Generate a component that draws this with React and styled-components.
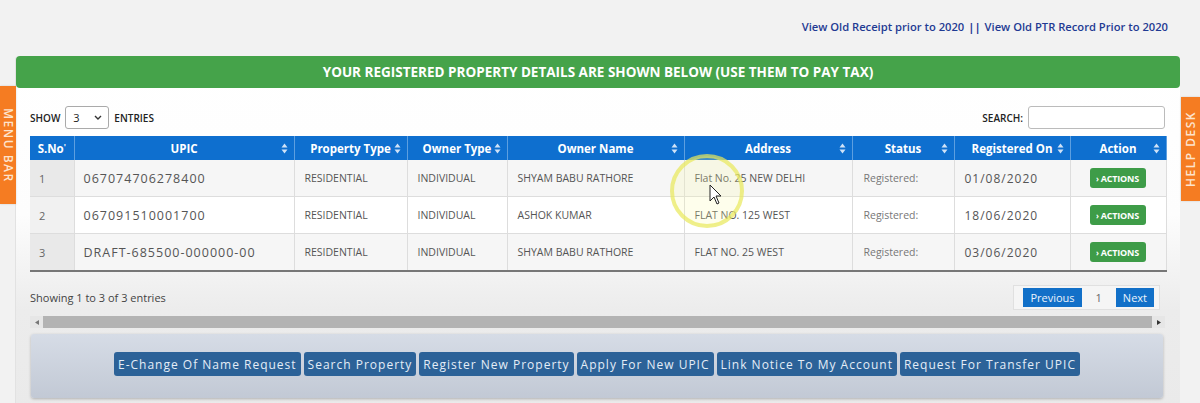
import React from "react";
import styled, { createGlobalStyle } from "styled-components";

const GlobalStyle = createGlobalStyle`
  html, body {
    margin: 0;
    padding: 0;
    background: #f2f2f2;
    font-family: "Open Sans", "Liberation Sans", sans-serif;
  }
`;

const columns = [
  { key: "sno", title: "S.No", width: 44, sort: false },
  { key: "upic", title: "UPIC", width: 220, sort: true },
  { key: "ptype", title: "Property Type", width: 113, sort: true },
  { key: "otype", title: "Owner Type", width: 100, sort: true },
  { key: "oname", title: "Owner Name", width: 177, sort: true },
  { key: "address", title: "Address", width: 168, sort: true },
  { key: "status", title: "Status", width: 102, sort: true },
  { key: "regon", title: "Registered On", width: 116, sort: true },
  { key: "action", title: "Action", width: 96, sort: true },
];

const rows = [
  {
    sno: "1",
    upic: "067074706278400",
    ptype: "RESIDENTIAL",
    otype: "INDIVIDUAL",
    oname: "SHYAM BABU RATHORE",
    address: "Flat No. 25 NEW DELHI",
    status: "Registered:",
    regon: "01/08/2020",
  },
  {
    sno: "2",
    upic: "067091510001700",
    ptype: "RESIDENTIAL",
    otype: "INDIVIDUAL",
    oname: "ASHOK KUMAR",
    address: "FLAT NO. 125 WEST",
    status: "Registered:",
    regon: "18/06/2020",
  },
  {
    sno: "3",
    upic: "DRAFT-685500-000000-00",
    ptype: "RESIDENTIAL",
    otype: "INDIVIDUAL",
    oname: "SHYAM BABU RATHORE",
    address: "FLAT NO. 25 WEST",
    status: "Registered:",
    regon: "03/06/2020",
  },
];

const links = [
  "E-Change Of Name Request",
  "Search Property",
  "Register New Property",
  "Apply For New UPIC",
  "Link Notice To My Account",
  "Request For Transfer UPIC",
];

function SortIcon() {
  return (
    <svg width="7" height="11" viewBox="0 0 7 11">
      <path d="M3.5 0.5 L6.5 4.5 L0.5 4.5 Z" fill="#cfe2f7" />
      <path d="M3.5 10.5 L6.5 6.5 L0.5 6.5 Z" fill="#cfe2f7" />
    </svg>
  );
}

function App() {
  return (
    <Page>
      <GlobalStyle />
      <TopLinks>
        <TopLink>View Old Receipt prior to 2020</TopLink>
        <Sep>||</Sep>
        <TopLink>View Old PTR Record Prior to 2020</TopLink>
      </TopLinks>

      <Card>
        <CardTitle>
          YOUR REGISTERED PROPERTY DETAILS ARE SHOWN BELOW (USE THEM TO PAY TAX)
        </CardTitle>
        <CardBody>
          <Controls>
            <Label>
              SHOW
              <Select>
                <span>3</span>
                <svg width="8" height="5" viewBox="0 0 8 5">
                  <path d="M1 1 L4 4 L7 1" stroke="#333" strokeWidth="1.4" fill="none" />
                </svg>
              </Select>
              ENTRIES
            </Label>
            <Label>
              SEARCH:
              <SearchInput />
            </Label>
          </Controls>

          <Table>
            <colgroup>
              {columns.map((c) => (
                <col key={c.key} style={{ width: c.width }} />
              ))}
            </colgroup>
            <thead>
              <tr>
                {columns.map((c) => (
                  <Th key={c.key}>
                    {c.title}
                    {c.sort ? (
                      <SortWrap>
                        <SortIcon />
                      </SortWrap>
                    ) : (
                      <Tick>'</Tick>
                    )}
                  </Th>
                ))}
              </tr>
            </thead>
            <tbody>
              {rows.map((r, i) => (
                <Tr key={r.sno} $odd={i % 2 === 0}>
                  <IndexCell $odd={i % 2 === 0}>{r.sno}</IndexCell>
                  <Td $size={12.5} $pad={9} $spacing={1}>{r.upic}</Td>
                  <Td>{r.ptype}</Td>
                  <Td>{r.otype}</Td>
                  <Td>{r.oname}</Td>
                  <Td>{r.address}</Td>
                  <Td $pad={11} $muted>{r.status}</Td>
                  <Td $size={12} $pad={10} $spacing={1}>{r.regon}</Td>
                  <Td $center>
                    <ActionBtn>
                      <small>›</small> ACTIONS
                    </ActionBtn>
                  </Td>
                </Tr>
              ))}
            </tbody>
          </Table>

          <Footer>
            <Info>Showing 1 to 3 of 3 entries</Info>
            <Pager>
              <PageBtn>Previous</PageBtn>
              <PageNum>1</PageNum>
              <PageBtn>Next</PageBtn>
            </Pager>
          </Footer>

          <Scrollbar>
            <ScrollArrow>
              <svg width="4" height="5" viewBox="0 0 4 5">
                <path d="M4 0 L0 2.5 L4 5 Z" fill="#777" />
              </svg>
            </ScrollArrow>
            <ScrollThumb />
            <ScrollArrow>
              <svg width="4" height="5" viewBox="0 0 4 5">
                <path d="M0 0 L4 2.5 L0 5 Z" fill="#333" />
              </svg>
            </ScrollArrow>
          </Scrollbar>

          <LinkPanel>
            {links.map((l) => (
              <LinkBtn key={l}>{l}</LinkBtn>
            ))}
          </LinkPanel>
        </CardBody>
      </Card>

      <SideTab $side="left">MENU BAR</SideTab>
      <SideTab $side="right">HELP DESK</SideTab>

      <Highlight>
        <svg width="90" height="90" viewBox="0 0 90 90">
          <circle cx="45" cy="46" r="35" fill="rgba(250,250,170,0.22)" stroke="rgba(232,232,90,0.7)" strokeWidth="4" />
          <path
            d="M48 40 L48 56 L52 52 L55 59 L57 58 L54 51 L59 51 Z"
            fill="#fff"
            stroke="#222"
            strokeWidth="1"
            strokeLinejoin="round"
          />
        </svg>
      </Highlight>
    </Page>
  );
}

const Page = styled.div`
  position: relative;
  width: 1200px;
  height: 403px;
  overflow: hidden;
  background: #f2f2f2;
`;

const TopLinks = styled.div`
  height: 52px;
  display: flex;
  align-items: center;
  justify-content: flex-end;
  gap: 4px;
  padding-right: 32px;
  font-size: 11.2px;
  color: #1f3a93;
  font-weight: 600;
`;

const TopLink = styled.span`
  cursor: pointer;
`;

const Sep = styled.span`
  font-weight: 700;
`;

const Card = styled.div`
  margin: 4px 20px 0 15px;
  border-radius: 4px 4px 0 0;
  background: linear-gradient(#ffffff 0%, #fdfdfd 45%, #ececec 72%, #eaeaea 100%);
  border-left: 1px solid #e2e2e2;
`;

const CardTitle = styled.div`
  height: 32px;
  display: flex;
  align-items: center;
  justify-content: center;
  background: #45a34a;
  border-radius: 4px;
  color: #fff;
  font-weight: 700;
  font-size: 13.5px;
`;

const CardBody = styled.div`
  padding: 18px 15px 10px 14px;
  display: flex;
  flex-direction: column;
`;

const Controls = styled.div`
  display: flex;
  justify-content: space-between;
  align-items: center;
  height: 23px;
`;

const Label = styled.div`
  display: flex;
  align-items: center;
  gap: 5px;
  font-size: 10px;
  font-weight: 600;
  color: #222;
`;

const Select = styled.div`
  width: 44px;
  height: 23px;
  box-sizing: border-box;
  border: 1px solid #aaa;
  border-radius: 3px;
  background: #fff;
  display: flex;
  align-items: center;
  justify-content: space-between;
  padding: 0 6px 0 7px;
  font-size: 11px;
  font-weight: 400;
`;

const SearchInput = styled.div`
  width: 137px;
  height: 23px;
  box-sizing: border-box;
  border: 1px solid #bbb;
  border-radius: 3px;
  background: #fff;
`;

const Table = styled.table`
  margin-top: 7px;
  width: 1136px;
  border-collapse: collapse;
  table-layout: fixed;
  border-bottom: 2px solid #777;
`;

const Th = styled.th`
  position: relative;
  height: 24px;
  padding: 0;
  background: #0e6fcf;
  color: #fff;
  font-size: 11.5px;
  font-weight: 700;
  text-align: center;
  border-right: 1px solid #5d9fe0;
`;

const SortWrap = styled.span`
  position: absolute;
  right: 6px;
  top: 7px;
  display: flex;
`;

const Tick = styled.span`
  font-size: 8px;
  vertical-align: top;
`;

const Tr = styled.tr`
  background: ${(p) => (p.$odd ? "#f6f6f6" : "#ffffff")};
`;

const Td = styled.td`
  height: 36px;
  padding: 0 0 0 ${(p) => (p.$center ? 0 : p.$pad ? p.$pad : 10)}px;
  border: 1px solid #dddddd;
  border-top: none;
  font-size: ${(p) => (p.$size ? p.$size : 10.5)}px;
  letter-spacing: ${(p) => (p.$spacing ? p.$spacing : 0)}px;
  color: ${(p) => (p.$muted ? "#777" : "#555")};
  text-align: ${(p) => (p.$center ? "center" : "left")};
  white-space: nowrap;
  overflow: hidden;
`;

const IndexCell = styled(Td)`
  background: ${(p) => (p.$odd ? "#e9e9e9" : "#f1f1f1")};
  padding-left: 9px;
  font-size: 11px;
  color: #666;
  border-left: none;
`;

const ActionBtn = styled.span`
  display: inline-flex;
  align-items: center;
  gap: 2px;
  height: 20px;
  padding: 0 7px 0 6px;
  border-radius: 3px;
  background: #3e9c48;
  color: #fff;
  font-size: 9px;
  font-weight: 700;
  letter-spacing: -0.2px;
  small {
    font-size: 8px;
  }
`;

const Footer = styled.div`
  margin-top: 13px;
  display: flex;
  justify-content: space-between;
  align-items: center;
  padding-right: 5px;
`;

const Info = styled.span`
  font-size: 11px;
  color: #444;
`;

const Pager = styled.div`
  display: flex;
  align-items: center;
  gap: 15px;
  height: 25px;
  box-sizing: border-box;
  padding: 0 5px 0 9px;
  border: 1px solid #e0e0e0;
  background: #f5f5f5;
`;

const PageBtn = styled.span`
  height: 19px;
  display: flex;
  align-items: center;
  padding: 0 7px;
  background: #1270c8;
  color: #eaf3fc;
  font-size: 11px;
`;

const PageNum = styled.span`
  font-size: 11px;
  color: #666;
  margin: 0 -1px;
`;

const Scrollbar = styled.div`
  margin-top: 6px;
  height: 12px;
  display: flex;
  align-items: stretch;
  background: #e6e6e6;
`;

const ScrollArrow = styled.div`
  width: 13px;
  display: flex;
  align-items: center;
  justify-content: center;
`;

const ScrollThumb = styled.div`
  flex: 1;
  background: #b3b3b3;
`;

const LinkPanel = styled.div`
  margin: 6px 2px 0 1px;
  height: 64px;
  display: flex;
  align-items: flex-start;
  justify-content: center;
  gap: 3px;
  padding-top: 18px;
  box-sizing: border-box;
  border-radius: 3px;
  background: linear-gradient(#d6dce6, #c2c9d5);
  box-shadow: 0 1px 3px rgba(0, 0, 0, 0.25);
`;

const LinkBtn = styled.span`
  height: 24px;
  display: flex;
  align-items: center;
  padding: 0 4px;
  border-radius: 3px;
  background: #2c6298;
  color: #e4edf7;
  font-size: 12px;
  letter-spacing: 1px;
  white-space: nowrap;
`;

const SideTab = styled.div`
  position: absolute;
  top: ${(p) => (p.$side === "left" ? 86 : 97)}px;
  ${(p) => (p.$side === "left" ? "left: 0;" : "right: 0;")}
  width: ${(p) => (p.$side === "left" ? 16 : 19)}px;
  height: ${(p) => (p.$side === "left" ? 118 : 104)}px;
  background: #f57c22;
  color: #fde3cc;
  font-size: 12px;
  font-weight: 600;
  letter-spacing: 1.5px;
  display: flex;
  align-items: center;
  justify-content: center;
  writing-mode: vertical-rl;
  transform: ${(p) => (p.$side === "left" ? "none" : "rotate(180deg)")};
  box-shadow: 0 0 2px rgba(0, 0, 0, 0.15);
`;

const Highlight = styled.div`
  position: absolute;
  left: 662px;
  top: 145px;
  width: 90px;
  height: 90px;
  pointer-events: none;
`;

export default App;
